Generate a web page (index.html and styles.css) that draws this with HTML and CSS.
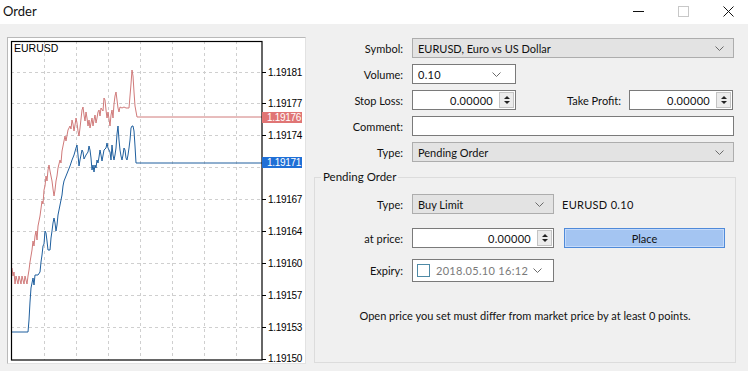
FILE: index.html
```html
<!DOCTYPE html>
<html>
<head>
<meta charset="utf-8">
<link rel="stylesheet" href="styles.css">
</head>
<body>
<div class="window">
  <div class="titlebar">
    <span class="title">Order</span>
    <div class="controls">
      <svg width="11" height="11" viewBox="0 0 11 11"><path d="M0 5.5H11" stroke="#111" stroke-width="1"/></svg>
      <svg width="11" height="11" viewBox="0 0 11 11"><rect x="0.5" y="0.5" width="10" height="10" fill="none" stroke="#c8c8c8"/></svg>
      <svg width="11" height="11" viewBox="0 0 11 11"><path d="M0.5 0.5L10.5 10.5M10.5 0.5L0.5 10.5" stroke="#111" stroke-width="1"/></svg>
    </div>
  </div>
  <div class="content">
    <div class="chart">
      <svg class="chart-svg" width="297" height="325" viewBox="8 38 297 325">
        <rect x="8" y="38" width="297" height="325" fill="#fff"/>
        <g class="grid" stroke="#cfcfcf" stroke-dasharray="3,3" stroke-width="1">
          <path d="M44.5 41V360M76.5 41V360M108.5 41V360M140.5 41V360M172.5 41V360M204.5 41V360M236.5 41V360"/>
          <path d="M11 72.5H262M11 103.5H262M11 135.5H262M11 167.5H262M11 199.5H262M11 231.5H262M11 263.5H262M11 295.5H262M11 327.5H262"/>
        </g>
        <polyline fill="none" stroke="#d07a7a" stroke-width="1" points="12,268 13,276 14,272 15,284 16,276 18,284 19,276 21,284 22,276 24,284 25,276 27,284 28,276 29,270 30,262 31,256 32,250 33,241 34,246 35,236 36,231 37,240 38,226 40,216 42,201 43,204 44,190 45,186 46,176 47,181 48,170 49,165 50,171 51,176 52,181 53,189 54,196 55,190 56,181 57,176 58,168 60,160 61,163 62,151 63,146 64,141 65,136 66,141 68,130 70,126 71,129 72,120 73,124 74,131 75,125 76,118 77,123 78,131 79,136 80,128 82,110 83,107 84,115 85,121 86,112 87,118 88,126 89,120 90,128 91,123 92,118 93,126 94,120 95,115 96,123 97,118 98,112 99,110 100,116 101,108 103,111 104,98 105,100 106,110 107,118 108,112 109,119 110,126 111,115 112,110 113,118 114,104 115,96 116,92 117,100 118,108 119,112 120,107 122,108 124,107 126,108 129,108 130,96 131,84 132,70 133,76 134,92 135,106 137,117 262,117"/>
        <polyline fill="none" stroke="#1f5f9e" stroke-width="1" points="12,332 28,332 29,320 30,302 31,288 32,283 33,278 34,285 35,275 38,275 40,272 41,262 42,255 43,246 44,244 45,231 46,233 47,241 48,250 50,250 51,238 52,231 53,223 54,218 55,223 56,231 57,225 58,215 60,205 62,195 63,186 64,181 66,176 68,171 70,166 72,160 74,155 76,148 77,145 78,155 79,166 80,160 82,150 83,152 84,159 86,155 88,152 89,146 90,150 91,158 92,170 93,165 94,172 95,165 96,168 97,160 98,163 99,157 100,150 101,155 102,161 104,150 106,148 107,143 108,148 110,152 111,160 112,145 113,155 114,160 115,155 116,148 117,134 118,126 119,140 120,150 121,156 122,160 123,155 124,148 125,150 126,158 127,160 128,155 129,148 130,140 131,128 132,126 133,126 134,131 135,146 136,163 262,163"/>
        <rect x="11.5" y="41.5" width="250.5" height="318.5" fill="none" stroke="#000" stroke-width="1.2"/>
        <g stroke="#000" stroke-width="1">
          <path d="M262 72.5H266M262 103.5H266M262 135.5H266M262 167.5H266M262 199.5H266M262 231.5H266M262 263.5H266M262 295.5H266M262 327.5H266M262 359.5H266"/>
        </g>
        <text class="sym" x="14" y="52">EURUSD</text>
        <g class="prices">
          <text x="268" y="76">1.19181</text>
          <text x="268" y="107">1.19177</text>
          <text x="268" y="139">1.19174</text>
          <text x="268" y="203">1.19167</text>
          <text x="268" y="235">1.19164</text>
          <text x="268" y="267">1.19160</text>
          <text x="268" y="299">1.19157</text>
          <text x="268" y="331">1.19153</text>
          <text x="268" y="362">1.19150</text>
        </g>
        <rect x="262" y="112" width="40" height="11" fill="#e07575"/>
        <text class="tag" x="267" y="121">1.19176</text>
        <rect x="262" y="157" width="40" height="11" fill="#1f6fd6"/>
        <text class="tag" x="267" y="166">1.19171</text>
      </svg>
    </div>
    <div class="form">
      <div class="row">
        <span class="lbl">Symbol:</span>
        <div class="ctl select w-full"><span>EURUSD, Euro vs US Dollar</span><svg class="chev" width="9" height="5" viewBox="0 0 9 5"><path d="M0.5 0.5L4.5 4.5L8.5 0.5" stroke="#6a6a6a" fill="none"/></svg></div>
      </div>
      <div class="row">
        <span class="lbl">Volume:</span>
        <div class="ctl input combo w-small"><span class="mono">0.10</span><svg class="chev" width="9" height="5" viewBox="0 0 9 5"><path d="M0.5 0.5L4.5 4.5L8.5 0.5" stroke="#6a6a6a" fill="none"/></svg></div>
      </div>
      <div class="row">
        <span class="lbl">Stop Loss:</span>
        <div class="ctl input num w-small"><span class="val mono">0.00000</span><span class="spin"><i class="up"></i><i class="dn"></i></span></div>
        <span class="lbl tp">Take Profit:</span>
        <div class="ctl input num w-small"><span class="val mono">0.00000</span><span class="spin"><i class="up"></i><i class="dn"></i></span></div>
      </div>
      <div class="row">
        <span class="lbl">Comment:</span>
        <div class="ctl input w-full"></div>
      </div>
      <div class="row">
        <span class="lbl">Type:</span>
        <div class="ctl select w-full"><span>Pending Order</span><svg class="chev" width="9" height="5" viewBox="0 0 9 5"><path d="M0.5 0.5L4.5 4.5L8.5 0.5" stroke="#6a6a6a" fill="none"/></svg></div>
      </div>
      <fieldset class="group">
        <legend>Pending Order</legend>
        <div class="grow r1">
          <span class="lbl g">Type:</span>
          <div class="ctl select w-mid"><span>Buy Limit</span><svg class="chev" width="9" height="5" viewBox="0 0 9 5"><path d="M0.5 0.5L4.5 4.5L8.5 0.5" stroke="#6a6a6a" fill="none"/></svg></div>
          <span class="note mono">EURUSD 0.10</span>
        </div>
        <div class="grow r2">
          <span class="lbl g">at price:</span>
          <div class="ctl input num w-mid"><span class="val mono">0.00000</span><span class="spin"><i class="up"></i><i class="dn"></i></span></div>
          <div class="place">Place</div>
        </div>
        <div class="grow r3">
          <span class="lbl g">Expiry:</span>
          <div class="ctl input expiry w-mid"><span class="cb"></span><span class="date mono">2018.05.10 16:12</span><svg class="chev" width="9" height="5" viewBox="0 0 9 5"><path d="M0.5 0.5L4.5 4.5L8.5 0.5" stroke="#6a6a6a" fill="none"/></svg></div>
        </div>
        <p class="info">Open price you set must differ from market price by at least 0 points.</p>
      </fieldset>
    </div>
  </div>
</div>
</body>
</html>
```

FILE: styles.css
```css
* { box-sizing: border-box; }
html, body { margin: 0; padding: 0; }
body {
  width: 748px;
  height: 371px;
  overflow: hidden;
  background: #f0f0f0;
  font-family: Lato, "Liberation Sans", sans-serif;
  font-size: 11px;
  color: #111;
}
.titlebar {
  height: 24px;
  background: #fff;
  display: flex;
  align-items: center;
  justify-content: space-between;
}
.title {
  font-size: 13px;
  padding-left: 3px;
  margin-top: -2px;
}
.controls {
  display: flex;
  gap: 34px;
  padding-right: 14px;
  align-items: center;
  margin-top: -1px;
}
.controls svg { display: block; }

.content {
  display: flex;
  padding: 13px 0 0 7px;
}
.chart {
  width: 299px;
  height: 327px;
  border: 1px solid #b9b9b9;
  border-right-color: #e2e2e2;
  border-bottom-color: #e2e2e2;
  background: #fff;
}
.chart-svg { display: block; }
.chart-svg text {
  font-family: "Liberation Sans", Arial, sans-serif;
  font-size: 10px;
  letter-spacing: -0.3px;
  fill: #000;
}
.chart-svg text.sym { font-size: 10.5px; letter-spacing: 0; }
.chart-svg text.tag { fill: #fff; }

.form {
  width: 442px;
  padding-top: 1px;
  display: flex;
  flex-direction: column;
  gap: 6px;
}
.row {
  display: flex;
  align-items: center;
  height: 20px;
}
.lbl {
  width: 97px;
  text-align: right;
  margin-right: 9px;
  flex: none;
}
.lbl.tp { width: 105px; margin-right: 8px; }
.lbl.g { width: 88px; }
.ctl {
  height: 20px;
  display: flex;
  align-items: center;
  flex: none;
}
.w-full { width: 322px; }
.w-small { width: 104px; }
.w-mid { width: 142px; }
.select {
  background: #e3e3e3;
  border: 1px solid #adadad;
  padding: 0 9px 0 5px;
  justify-content: space-between;
}
.input {
  background: #fff;
  border: 1px solid #7a7a7a;
  padding: 0 5px;
}
.combo { justify-content: space-between; padding-right: 14px; }
.chev { display: block; flex: none; }
.mono { letter-spacing: 0.3px; }
.num { justify-content: flex-end; padding: 0 1px 0 5px; }
.num .val { margin-right: 6px; }
.spin {
  width: 15px;
  height: 16px;
  border: 1px solid #c4c4c4;
  background: #ececec;
  display: flex;
  flex-direction: column;
  align-items: center;
  justify-content: center;
  gap: 2px;
}
.spin i {
  display: block;
  width: 0;
  height: 0;
  border-left: 3px solid transparent;
  border-right: 3px solid transparent;
}
.spin i.up { border-bottom: 3px solid #222; }
.spin i.dn { border-top: 3px solid #222; }

.group {
  margin: 1px 0 0 8px;
  width: 422px;
  height: 194px;
  border: 1px solid #dcdcdc;
  padding: 0;
  min-width: 0;
}
.group legend {
  margin-left: 6px;
  padding: 0 2px;
  font-size: 11.5px;
  line-height: 16px;
}
.grow {
  display: flex;
  align-items: center;
}
.r1 { margin-top: 9px; }
.r2 { margin-top: 14px; }
.r3 { margin-top: 11px; }
.note { margin-left: 8px; }
.place {
  margin-left: 10px;
  width: 161px;
  height: 20px;
  background: #a4c5f2;
  border: 1px solid #4f8ad9;
  box-shadow: inset 0 0 0 1px #c4dafa;
  display: flex;
  align-items: center;
  justify-content: center;
}
.expiry { height: 23px; padding: 0 11px 0 4px; }
.cb {
  width: 13px;
  height: 13px;
  border: 1px solid #4e8aa6;
  background: #fff;
  flex: none;
}
.date {
  color: #7a7a7a;
  margin-left: 6px;
  white-space: nowrap;
  flex: none;
}
.expiry .chev { margin-left: auto; }
.info {
  margin: 27px 0 0 0;
  text-align: center;
}
```
